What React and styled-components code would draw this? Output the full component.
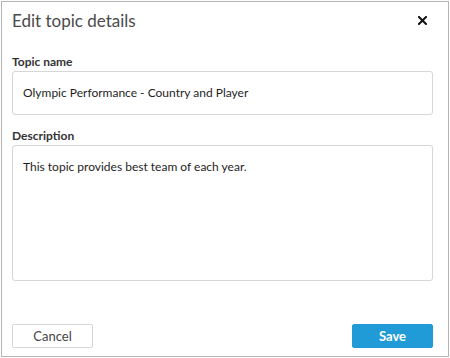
import React from "react";
import styled, { createGlobalStyle } from "styled-components";

const Global = createGlobalStyle`
  html, body { margin: 0; padding: 0; background: #ffffff; }
  body { font-family: "Lato", "Liberation Sans", sans-serif; }
  #root { padding: 1px; width: 450px; height: 358px; box-sizing: border-box; }
`;

const Dialog = styled.div`
  box-sizing: border-box;
  width: 448px;
  height: 356px;
  border: 1px solid #b4b4b4;
  background: #fff;
  display: flex;
  flex-direction: column;
  padding: 0 15px 0 10px;
`;

const Header = styled.div`
  display: flex;
  align-items: center;
  justify-content: space-between;
  height: 36px;
`;

const Title = styled.h1`
  margin: 0;
  font-size: 17px;
  font-weight: 400;
  color: #4a4a4a;
`;

const Close = styled.button`
  border: 0;
  background: none;
  padding: 0;
  width: 16px;
  height: 16px;
  display: flex;
  align-items: center;
  justify-content: center;
  margin-right: 3px;
  cursor: pointer;
`;

const Field = styled.div`
  display: flex;
  flex-direction: column;
  margin-top: ${(p) => p.$top}px;
`;

const Label = styled.label`
  font-size: 12px;
  font-weight: 700;
  color: #333;
  line-height: 14px;
  margin-bottom: 2px;
`;

const Box = styled.div`
  box-sizing: border-box;
  width: 421px;
  height: ${(p) => p.$h}px;
  border: 1px solid #d6d6d6;
  border-radius: 3px;
  padding: ${(p) => p.$pad};
  font-size: 12px;
  color: #1e1e1e;
  line-height: 18px;
`;

const Footer = styled.div`
  margin-top: auto;
  margin-bottom: 8px;
  display: flex;
  justify-content: space-between;
  width: 421px;
`;

const Button = styled.button`
  box-sizing: border-box;
  width: ${(p) => p.$w}px;
  height: 24px;
  border-radius: 2px;
  font-family: inherit;
  font-size: 13px;
  font-weight: ${(p) => (p.$primary ? 700 : 400)};
  color: ${(p) => (p.$primary ? "#fff" : "#444")};
  background: ${(p) => (p.$primary ? "#219bd7" : "#fff")};
  border: 1px solid ${(p) => (p.$primary ? "#219bd7" : "#d6d6d6")};
  padding: 0;
  cursor: pointer;
`;

export default function App() {
  return (
    <>
      <Global />
      <Dialog>
        <Header>
          <Title>Edit topic details</Title>
          <Close aria-label="Close">
            <svg width="9" height="9" viewBox="0 0 9 9">
              <path d="M1 1L8 8M8 1L1 8" stroke="#111" strokeWidth="2" strokeLinecap="square" />
            </svg>
          </Close>
        </Header>
        <Field $top={17}>
          <Label>Topic name</Label>
          <Box $h={44} $pad="12px 10px">Olympic Performance - Country and Player</Box>
        </Field>
        <Field $top={14}>
          <Label>Description</Label>
          <Box $h={136} $pad="12px 10px">This topic provides best team of each year.</Box>
        </Field>
        <Footer>
          <Button $w={81}>Cancel</Button>
          <Button $w={81} $primary>Save</Button>
        </Footer>
      </Dialog>
    </>
  );
}
